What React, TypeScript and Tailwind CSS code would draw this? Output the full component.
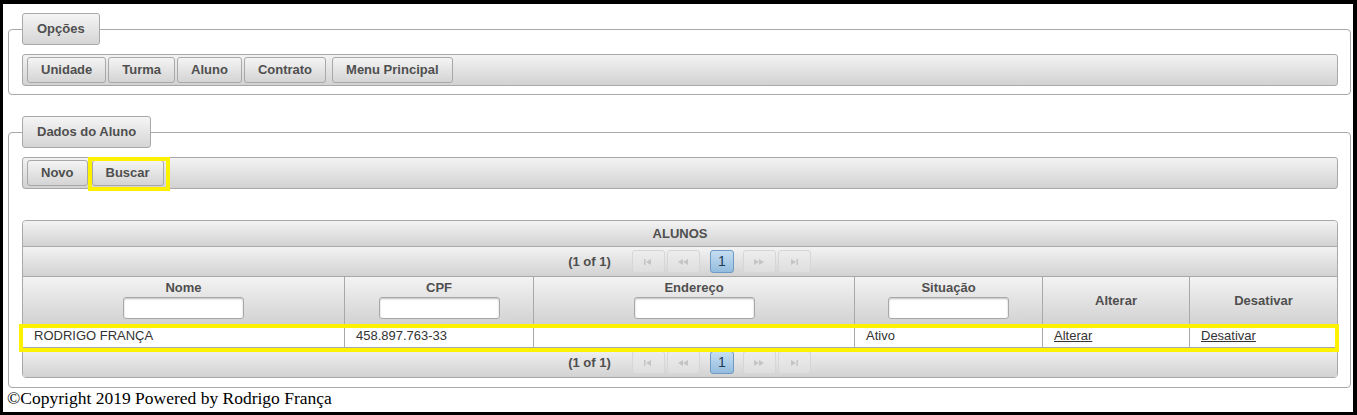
import React from 'react';

const grad = 'bg-linear-to-b from-[#f3f3f3] to-[#d2d2d2]';
const btn =
  'h-[26px] rounded-[3px] border border-[#a8a8a8] bg-linear-to-b from-[#f4f4f4] to-[#d4d4d4] px-[13px] text-[13px] font-bold text-[#4f4f4f] leading-[24px]';

function Legend({ children }: { children: React.ReactNode }) {
  return (
    <legend className="h-[32px] rounded-[3px] border border-[#a8a8a8] bg-linear-to-b from-[#f5f5f5] to-[#d5d5d5] px-[14px] text-[13px] font-bold leading-[30px] text-[#4f4f4f]">
      {children}
    </legend>
  );
}

function PgIcon({ kind }: { kind: 'first' | 'prev' | 'next' | 'last' }) {
  const c = '#c4c4c4';
  return (
    <svg width="12" height="8" viewBox="0 0 12 8">
      {kind === 'first' && (
        <>
          <rect x="2" y="1" width="1.5" height="6" fill={c} />
          <polygon points="9,1 4,4 9,7" fill={c} />
        </>
      )}
      {kind === 'prev' && (
        <>
          <polygon points="6,1 1,4 6,7" fill={c} />
          <polygon points="11,1 6,4 11,7" fill={c} />
        </>
      )}
      {kind === 'next' && (
        <>
          <polygon points="1,1 6,4 1,7" fill={c} />
          <polygon points="6,1 11,4 6,7" fill={c} />
        </>
      )}
      {kind === 'last' && (
        <>
          <polygon points="3,1 8,4 3,7" fill={c} />
          <rect x="8.5" y="1" width="1.5" height="6" fill={c} />
        </>
      )}
    </svg>
  );
}

function PgBtn({ kind, className = '' }: { kind: 'first' | 'prev' | 'next' | 'last'; className?: string }) {
  return (
    <span
      className={`flex h-[23px] w-[33px] items-center justify-center rounded-[3px] border border-[#d6d6d6] bg-linear-to-b from-[#ededed] to-[#dedede] ${className}`}
    >
      <PgIcon kind={kind} />
    </span>
  );
}

function Paginator({ h }: { h: string }) {
  return (
    <div className={`flex ${h} items-center justify-center border-t border-[#a8a8a8] pl-[19px] ${grad}`}>
      <span className="mr-[21px] text-[13px] font-bold text-[#4f4f4f]">(1 of 1)</span>
      <PgBtn kind="first" />
      <PgBtn kind="prev" className="ml-[2px]" />
      <span className="ml-[10px] flex h-[23px] w-[24px] items-center justify-center rounded-[3px] border border-[#6e9bc3] bg-linear-to-b from-[#c6def1] to-[#94bcde] text-[14px] text-[#1d3a57]">
        1
      </span>
      <PgBtn kind="next" className="ml-[9px]" />
      <PgBtn kind="last" className="ml-[2px]" />
    </div>
  );
}

const cols = 'grid grid-cols-[321px_189px_321px_188px_147px_148px]';

function HeadCell({ label, filter, first }: { label: string; filter?: boolean; first?: boolean }) {
  return (
    <div
      className={`flex h-[47px] flex-col items-center ${filter ? 'pt-[3px]' : 'justify-center'} ${first ? '' : 'border-l border-[#a8a8a8]'}`}
    >
      <span className="text-[13px] font-bold leading-[16px] text-[#4f4f4f]">{label}</span>
      {filter && (
        <input className="mt-[1px] h-[22px] w-[121px] rounded-[3px] border border-[#a8a8a8] bg-white shadow-[inset_0_1px_2px_rgba(0,0,0,0.25)] outline-none" />
      )}
    </div>
  );
}

function Cell({ children, first }: { children?: React.ReactNode; first?: boolean }) {
  return (
    <div
      className={`h-[22px] pl-[11px] text-[13px] leading-[22px] text-[#333] ${first ? '' : 'border-l border-[#a8a8a8]'}`}
    >
      {children}
    </div>
  );
}

export default function App() {
  return (
    <div className="h-[415px] w-[1357px] overflow-hidden border-b-[3px] border-l-[3px] border-r-4 border-t-4 border-black bg-white font-['Liberation_Sans',Arial,sans-serif]">
      <fieldset className="ml-[5px] mt-[9px] w-[1343px] rounded-[4px] border border-[#a8a8a8] pb-[8px] pl-[13px] pr-[12px] pt-[9px]">
        <Legend>Opções</Legend>
        <div className={`flex h-[32px] items-center rounded-[3px] border border-[#a8a8a8] pl-[4px] ${grad}`}>
          <button className={btn}>Unidade</button>
          <button className={`${btn} ml-[2px]`}>Turma</button>
          <button className={`${btn} ml-[2px]`}>Aluno</button>
          <button className={`${btn} ml-[2px]`}>Contrato</button>
          <button className={`${btn} ml-[6px]`}>Menu Principal</button>
        </div>
      </fieldset>

      <fieldset className="ml-[5px] mt-[21px] w-[1343px] rounded-[4px] border border-[#a8a8a8] pb-[9px] pl-[13px] pr-[12px] pt-[9px]">
        <Legend>Dados do Aluno</Legend>
        <div className={`flex h-[32px] items-center rounded-[3px] border border-[#a8a8a8] pl-[4px] ${grad}`}>
          <button className={btn}>Novo</button>
          <span className="relative ml-[4px] flex">
            <button className={btn}>Buscar</button>
            <span className="pointer-events-none absolute -bottom-[5px] -left-[4px] -right-[6px] -top-[3px] border-4 border-[#fff200]" />
          </span>
        </div>

        <div className="mt-[31px] rounded-[4px] border border-[#a8a8a8]">
          <div className={`flex h-[25px] items-center justify-center rounded-t-[4px] text-[13px] font-bold text-[#4f4f4f] ${grad}`}>
            ALUNOS
          </div>
          <Paginator h="h-[30px]" />
          <div className={`${cols} border-t border-[#a8a8a8] ${grad}`}>
            <HeadCell label="Nome" filter first />
            <HeadCell label="CPF" filter />
            <HeadCell label="Endereço" filter />
            <HeadCell label="Situação" filter />
            <HeadCell label="Alterar" />
            <HeadCell label="Desativar" />
          </div>
          <div className={`${cols} relative border-t border-[#a8a8a8] bg-white`}>
            <Cell first>RODRIGO FRANÇA</Cell>
            <Cell>458.897.763-33</Cell>
            <Cell />
            <Cell>Ativo</Cell>
            <Cell>
              <a className="underline">Alterar</a>
            </Cell>
            <Cell>
              <a className="underline">Desativar</a>
            </Cell>
            <span className="pointer-events-none absolute -left-[4px] -right-[2px] -top-[1px] h-[28px] border-4 border-[#fff200]" />
          </div>
          <Paginator h="h-[30px]" />
        </div>
      </fieldset>

      <div className="pl-[4px] font-['Liberation_Serif',serif] text-[17.5px] leading-[20px] text-black">
        ©Copyright 2019 Powered by Rodrigo França
      </div>
    </div>
  );
}
